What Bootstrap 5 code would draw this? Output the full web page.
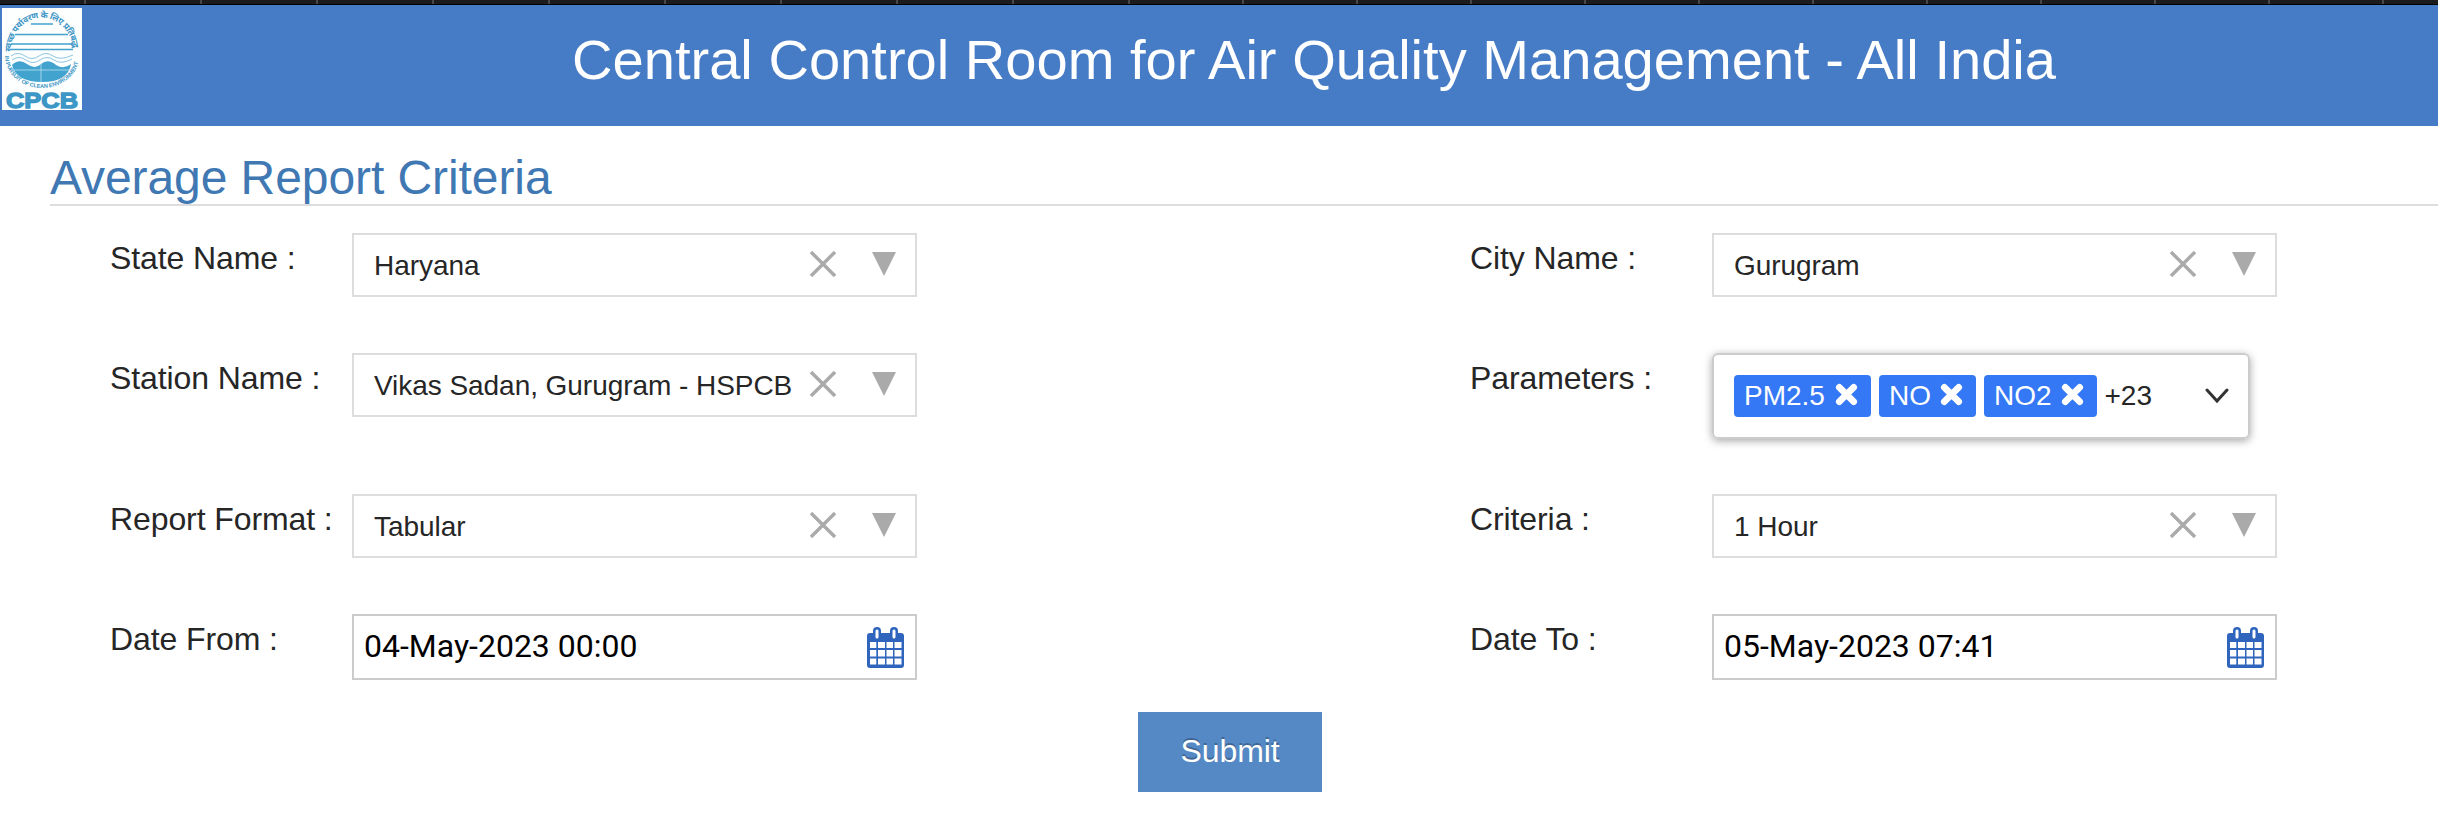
<!DOCTYPE html>
<html lang="en">
<head>
<meta charset="utf-8">
<title>Central Control Room for Air Quality Management</title>
<link href="https://cdn.jsdelivr.net/npm/bootstrap@5.3.0/dist/css/bootstrap.min.css" rel="stylesheet">
<style>
body{font-family:"Liberation Sans",Arial,sans-serif;color:#262626;background:#fff;font-size:32px;line-height:1.2;overflow:hidden}
.tabstrip{width:100%;height:5px;background:#1b1b1b;border-bottom:1px solid #000;display:block}
.masthead{height:121px;background:#467bc6;color:#fff;padding:3px 0 0 2px}
.masthead svg{overflow:visible}
.site-title{font-size:56.1px;font-weight:400;line-height:66px;margin:19px 0 0 490px;white-space:nowrap}
.criteria{margin-left:50px}
.criteria h2{font-size:48px;letter-spacing:-.08px;font-weight:400;line-height:56px;color:#4078b3;border-bottom:2px solid #ddd;margin:24px 0 27px;height:56px}
.form-line{height:120px;padding-left:60px}
.form-line.tall{height:141px}
.half{width:1360px}
.half+.half{width:auto}
.lbl{width:242px;line-height:36px;padding-top:7px;white-space:nowrap;letter-spacing:-.1px}
.pick{width:565px;height:64px;border:2px solid #ddd;font-size:28px;letter-spacing:-.05px;padding:1px 19px 0 20px;white-space:nowrap}
.pick svg{margin-top:-3px}
.datebox{width:565px;height:66px;border:2px solid #ccc;font-family:Roboto,sans-serif;color:#000;padding:0 11px 0 10px}
.datebox span{margin-top:-2px}
.multi{width:538px;height:86px;border:2px solid #ccc;border-radius:6px;box-shadow:0 2px 8px rgba(0,0,0,.35);font-size:28px;padding:0 19px 0 20px}
.chip{height:42px;background:#3478f5;color:#fff;border-radius:4px;padding:0 13px 0 10px;margin-right:8px}
.chip svg{margin-left:9px;margin-top:-4px}
.chip:first-child svg{margin-left:10px}
.btn-submit{width:184px;height:80px;background:#5489c5;color:#fff;border:0;border-radius:0;font-size:32px;letter-spacing:-.1px;text-shadow:0 -2px 0 rgba(0,0,0,.25);margin:-22px 0 0 1138px;padding:0 0 2px;display:block}
</style>
</head>
<body>
<svg width="0" height="0" class="position-absolute">
<symbol id="cross" viewBox="0 0 26 26"><path d="M1 1 25 25M25 1 1 25" stroke="#aaa" stroke-width="3.400" fill="none"/></symbol>
<symbol id="tri" viewBox="0 0 24 24"><path d="M0 0H24L12 24Z" fill="#aaa"/></symbol>
<symbol id="times" viewBox="0 0 24 24"><path d="M4.500 4.500 19.500 19.500M19.500 4.500 4.500 19.500" stroke="#fff" stroke-width="7" stroke-linecap="round"/></symbol>
<symbol id="cal" viewBox="0 0 37 41"><path d="M3 6H34Q37 6 37 9V38Q37 41 34 41H3Q0 41 0 38V9Q0 6 3 6Z" fill="#2f65bd"/><rect x="6" y="0" width="8" height="13" rx="4" fill="#2f65bd"/><rect x="23" y="0" width="8" height="13" rx="4" fill="#2f65bd"/><rect x="8.500" y="2.500" width="3" height="9" rx="1.500" fill="#fff"/><rect x="25.500" y="2.500" width="3" height="9" rx="1.500" fill="#fff"/><path d="M3 15h6.300v6H3zM11 15h7v6h-7zM19.500 15h6.500v6h-6.500zM27.500 15H34.500v6h-7zM3 23h6.300v6.500H3zM11 23h7v6.500h-7zM19.500 23h6.500v6.500h-6.500zM27.500 23H34.500v6.500h-7zM3 31.500h6.300v6H3zM11 31.500h7v6h-7zM19.500 31.500h6.500v6h-6.500zM27.500 31.500H34.500v6h-7z" fill="#fff"/></symbol>
</svg>
<svg class="tabstrip"><path d="M85 0v4M201 0v4M317 0v4M433 0v4M549 0v4M665 0v4M781 0v4M897 0v4M1013 0v4M1129 0v4M1243 0v4M1357 0v4M1471 0v4M1585 0v4M1699 0v4M1813 0v4M1927 0v4M2041 0v4M2155 0v4M2269 0v4M2383 0v4" stroke="#484848" stroke-width="2"/></svg>
<header class="masthead d-flex align-items-start">
<svg width="80" height="102" viewBox="0 0 80 102" role="img" aria-label="CPCB">
<rect width="80" height="102" fill="#fdfefe"/>
<defs><path id="arcTop" d="M9 44A31 34 0 0 1 71 44"/><path id="arcBottom" d="M3 48A37 32 0 0 0 77 48"/></defs>
<g stroke="#43a3cf" stroke-width="1.600"><path d="M29 16H51M13 26.500H66M9 36H71M9 41.500H71"/></g>
<g fill="none" stroke="#8cc6e2" stroke-width="1"><path d="M9 48q7-5 14 0t14 0t14 0t20-1M10 52q7-5 14 0t14 0t14 0t18-1"/></g>
<path d="M10 57Q17 50 25 56Q33 62 39 56Q46 50 54 57Q62 62 69 56Q66 74 40 74Q14 74 10 57Z" fill="#43a3cf"/>
<path d="M11 62H69M39 56V74" stroke="#b9dff0" stroke-width=".8"/>
<g fill="#3c96c6">
<text font-family="'Noto Sans','Noto Sans Devanagari',sans-serif" font-size="8.500" font-weight="bold"><textPath href="#arcTop" textLength="98">स्वच्छ पर्यावरण के लिए प्रतिबद्ध</textPath></text>
<text font-family="Liberation Sans,sans-serif" font-size="5.600" font-weight="bold"><textPath href="#arcBottom" textLength="102">IN PURSUIT OF CLEAN ENVIRONMENT</textPath></text>
<text x="4" y="100" font-family="Liberation Sans,sans-serif" font-size="22" font-weight="bold" stroke="#3c96c6" stroke-width="1.300" textLength="72" lengthAdjust="spacingAndGlyphs">CPCB</text></g>
</svg>
<h1 class="site-title">Central Control Room for Air Quality Management - All India</h1>
</header>
<main>
<section class="criteria"><h2>Average Report Criteria</h2>
<div class="form-line d-flex">
<div class="half d-flex flex-shrink-0"><label class="lbl">State Name :</label><div class="pick d-flex align-items-center"><span class="me-auto">Haryana</span><svg width="26" height="26"><use href="#cross"/></svg><svg class="ms-4" width="36" height="24" viewBox="-12 0 36 24"><use href="#tri" width="24" height="24"/></svg></div></div>
<div class="half d-flex flex-shrink-0"><label class="lbl">City Name :</label><div class="pick d-flex align-items-center"><span class="me-auto">Gurugram</span><svg width="26" height="26"><use href="#cross"/></svg><svg class="ms-4" width="36" height="24" viewBox="-12 0 36 24"><use href="#tri" width="24" height="24"/></svg></div></div>
</div>
<div class="form-line tall d-flex">
<div class="half d-flex flex-shrink-0"><label class="lbl">Station Name :</label><div class="pick d-flex align-items-center"><span class="me-auto">Vikas Sadan, Gurugram - HSPCB</span><svg width="26" height="26"><use href="#cross"/></svg><svg class="ms-4" width="36" height="24" viewBox="-12 0 36 24"><use href="#tri" width="24" height="24"/></svg></div></div>
<div class="half d-flex flex-shrink-0 align-items-start"><label class="lbl">Parameters :</label><div class="multi d-flex align-items-center"><span class="chip d-flex align-items-center">PM2.5<svg width="23" height="23"><use href="#times"/></svg></span><span class="chip d-flex align-items-center">NO<svg width="23" height="23"><use href="#times"/></svg></span><span class="chip d-flex align-items-center">NO2<svg width="23" height="23"><use href="#times"/></svg></span><span class="me-auto">+23</span><svg width="24" height="16" viewBox="0 0 24 16"><path d="M2 2 12 13 22 2" fill="none" stroke="#333" stroke-width="3" stroke-linecap="round"/></svg></div></div>
</div>
<div class="form-line d-flex">
<div class="half d-flex flex-shrink-0"><label class="lbl">Report Format :</label><div class="pick d-flex align-items-center"><span class="me-auto">Tabular</span><svg width="26" height="26"><use href="#cross"/></svg><svg class="ms-4" width="36" height="24" viewBox="-12 0 36 24"><use href="#tri" width="24" height="24"/></svg></div></div>
<div class="half d-flex flex-shrink-0"><label class="lbl">Criteria :</label><div class="pick d-flex align-items-center"><span class="me-auto">1 Hour</span><svg width="26" height="26"><use href="#cross"/></svg><svg class="ms-4" width="36" height="24" viewBox="-12 0 36 24"><use href="#tri" width="24" height="24"/></svg></div></div>
</div>
<div class="form-line d-flex">
<div class="half d-flex flex-shrink-0"><label class="lbl">Date From :</label><div class="datebox d-flex align-items-center"><span class="me-auto">04-May-2023 00:00</span><svg width="37" height="41"><use href="#cal"/></svg></div></div>
<div class="half d-flex flex-shrink-0"><label class="lbl">Date To :</label><div class="datebox d-flex align-items-center"><span class="me-auto">05-May-2023 07:41</span><svg width="37" height="41"><use href="#cal"/></svg></div></div>
</div>
</section>
<button class="btn btn-submit" type="button">Submit</button>
</main>
<script src="https://cdn.jsdelivr.net/npm/bootstrap@5.3.0/dist/js/bootstrap.bundle.min.js"></script>
</body>
</html>
